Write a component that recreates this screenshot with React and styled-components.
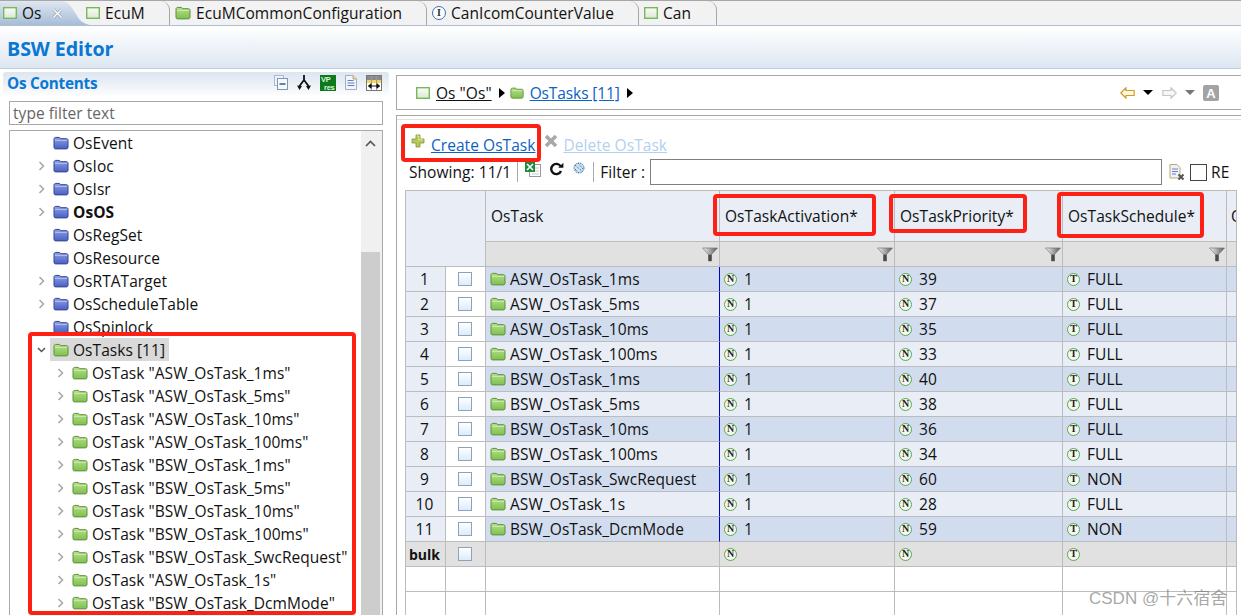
import React from "react";
import styled, { createGlobalStyle } from "styled-components";

const Global = createGlobalStyle`
  html, body { margin: 0; padding: 0; background: #fff; }
  body { font-family: "Open Sans", "Noto Sans", sans-serif; color: #111; }
`;

const Page = styled.div`
  position: relative; width: 1241px; height: 615px; overflow: hidden; background: #fff;
  font-size: 15.5px; letter-spacing: 0.05px;
`;
const Gap = styled.span`flex: none; width: ${p => p.$w}px;`;
const Lift = styled.span`flex: none; display: flex; margin-top: ${p => p.$by}px;`;

/* ---------- tabs ---------- */
const TabBar = styled.div`
  display: flex; height: 24px; background: #f2f2f2;
  border-top: 1px solid #a6a6a6; border-bottom: 1px solid #aebfd3;
`;
const ActiveTab = styled.div`
  position: relative; z-index: 1; flex: none; width: 90px; height: 24px; box-sizing: border-box;
  display: flex; align-items: center; padding-left: 3px; gap: 5px;
  background: linear-gradient(#dfe7f0, #a6bdd8);
  clip-path: path("M0 0 H62 C72 2 74 12 80 19 C83 22 86 23 90 24 H0 Z");
`;
const Tab = styled.div`
  flex: none; width: ${p => p.$w}px; height: 24px; box-sizing: border-box;
  margin-left: ${p => p.$ml || 0}px; padding-left: ${p => p.$pl || 5}px;
  display: flex; align-items: center; gap: 5px;
  border-right: 1px solid #a6a6a6; border-top-right-radius: 9px;
  background: #f2f2f2;
`;
const CloseMark = styled.svg`width: 11px; height: 11px; margin-left: 5px; flex: none;`;

/* ---------- header ---------- */
const EditorHeader = styled.div`
  height: 43px; box-sizing: border-box; padding-left: 7px; padding-top: 3px;
  display: flex; align-items: center;
  background: linear-gradient(#ffffff, #dde6f1);
  border-bottom: 1px solid #b6cde2;
  font-size: 19.7px; font-weight: 700; color: #0a78d2; letter-spacing: -0.1px;
`;

const Body = styled.div`display: flex; padding-top: 3px; height: 546px; box-sizing: border-box;`;

/* ---------- left ---------- */
const LeftColumn = styled.div`
  flex: none; width: 386px; margin-left: 3px; display: flex; flex-direction: column;
`;
const SectionHead = styled.div`
  height: 23px; flex: none; box-sizing: border-box; display: flex; align-items: center; padding: 0 7px 2px 4px;
  background: linear-gradient(#dde5f0, #fbfcfd); border-radius: 3px 3px 0 0;
  font-weight: 700; font-size: 15.3px; color: #0a78d2; letter-spacing: -0.25px;
`;
const SectionTools = styled.div`margin-left: auto; display: flex; align-items: center; gap: 9px;`;
const FilterBox = styled.div`
  flex: none; height: 24px; box-sizing: border-box; margin: 6px 6px 0; padding-left: 3px;
  border: 1px solid #a8a8a8; color: #666; display: flex; align-items: center;
`;
const TreeFrame = styled.div`
  flex: 1; min-height: 0; margin: 5px 6px 0; display: flex; border: 1px solid #a8a8a8; border-bottom: 0;
  overflow: hidden;
`;
const TreeList = styled.div`flex: 1; min-width: 0;`;
const Scroller = styled.div`
  flex: none; width: 21px; background: #f0f0f0; display: flex; flex-direction: column; align-items: flex-start;
`;
const ScrollUp = styled.svg`width: 19px; height: 24px; flex: none;`;
const ScrollThumb = styled.div`flex: 1; width: 19px; margin-top: 97px; background: #cdcdcd;`;
const TreeRow = styled.div`
  height: 23px; display: flex; align-items: center; padding-left: ${p => 23 + p.$depth * 19}px;
  font-weight: ${p => p.$bold ? 700 : 400}; white-space: nowrap;
`;
const ChevronSlot = styled.span`flex: none; width: 16px; margin-right: 4px; display: flex; justify-content: center;`;
const TreeNode = styled.span`
  display: flex; align-items: center; gap: 4px; height: 23px;
  margin-left: -3px; padding: 0 4px 0 3px; background: ${p => p.$sel ? "#d9d9d9" : "transparent"};
`;

/* ---------- right ---------- */
const RightColumn = styled.div`flex: 1; min-width: 0; margin-left: 7px; padding-top: 3px; display: flex; flex-direction: column;`;
const Breadcrumb = styled.div`
  flex: none; height: 35px; box-sizing: border-box; border: 1px solid #a8a8a8; border-right: 0;
  display: flex; align-items: center; padding-left: 19px; padding-right: 22px;
`;
const CrumbPlain = styled.span`margin-left: 6px; color: #111; text-decoration: underline;`;
const CrumbLink = styled.span`margin-left: 6px; color: #0a62c4; text-decoration: underline; letter-spacing: -0.1px;`;
const CrumbArrow = styled.span`
  width: 0; height: 0; margin: 0 5px 0 7px; border-left: 6px solid #000;
  border-top: 5px solid transparent; border-bottom: 5px solid transparent;
`;
const NavGroup = styled.div`margin-left: auto; display: flex; align-items: center;`;
const Caret = styled.span`
  width: 0; height: 0; margin: 0 ${p => p.$dim ? 8 : 9}px 0 8px; border-top: 5px solid ${p => p.$dim ? "#777" : "#000"};
  border-left: 5px solid transparent; border-right: 5px solid transparent;
`;
const MainPanel = styled.div`
  flex: 1; min-height: 0; margin-top: 5px; border-top: 1px solid #a8a8a8; border-left: 1px solid #a8a8a8;
  overflow: hidden;
`;
const InnerRule = styled.div`height: 1px; margin-top: 3px; background: #e2e2e2;`;
const ActionRow = styled.div`
  height: 25px; margin-top: 12px; display: flex; align-items: center; padding-left: 14px;
`;
const ActionLink = styled.span`
  color: ${p => p.$off ? "#b4d0ee" : "#0a62c4"}; text-decoration: underline;
  margin-left: ${p => p.$ml}px;
`;
const FilterRow = styled.div`
  height: 26px; margin-top: 2px; display: flex; align-items: center; padding-left: 12px;
`;
const Divider = styled.span`width: 1px; height: 20px; background: #a8a8a8; flex: none;`;
const FilterInput = styled.div`
  flex: none; width: 512px; height: 26px; box-sizing: border-box; border: 1px solid #7f7f7f; margin-left: 5px;
`;
const PlainBox = styled.span`
  flex: none; width: 15px; height: 15px; border: 1px solid #444; margin: 0 4px 0 5px;
`;

/* ---------- table ---------- */
const COLS = "40px 40px 234px 175px 168px 164px 9px";
const Table = styled.div`
  width: 832px; box-sizing: border-box; margin: 5px 0 0 8px; border: 1px solid #bcbcbc; border-bottom: 0;
`;
const HeadGrid = styled.div`display: grid; grid-template-columns: ${COLS}; grid-template-rows: 51px 25px;`;
const Corner = styled.div`
  grid-column: 1 / span 2; grid-row: 1 / span 2; background: #e8edf6;
  border-right: 1px solid #bcbcbc; border-bottom: 1px solid #bcbcbc;
`;
const HeadCell = styled.div`
  box-sizing: border-box; overflow: hidden; white-space: nowrap; padding-left: ${p => p.$pl || 5}px;
  display: flex; align-items: center; background: #e8edf6;
  border-right: ${p => p.$last ? 0 : "1px solid #bcbcbc"}; border-bottom: 1px solid #bcbcbc;
`;
const FilterCell = styled.div`
  box-sizing: border-box; background: #e1e1e1; display: flex; align-items: center; justify-content: flex-end; padding-right: 1px;
  border-right: ${p => p.$last ? 0 : "1px solid #bcbcbc"}; border-bottom: 1px solid #bcbcbc;
`;
const Row = styled.div`display: grid; grid-template-columns: ${COLS}; height: 25px;`;
const rowBg = p => ({ odd: "#d1ddee", even: "#e8edf6", bulk: "#e1e1e1", empty: "#fff" }[p.$tone]);
const NumCell = styled.div`
  box-sizing: border-box; display: flex; align-items: center; justify-content: center; padding-right: 2px;
  background: ${p => p.$tone === "bulk" ? "#e1e1e1" : p.$tone === "empty" ? "#fff" : "#e8edf6"};
  font-weight: ${p => p.$tone === "bulk" ? 700 : 400};
  font-size: ${p => p.$tone === "bulk" ? "14px" : "inherit"};
  border-right: 1px solid #bcbcbc; border-bottom: 1px solid #bcbcbc;
`;
const CheckCell = styled.div`
  box-sizing: border-box; display: flex; align-items: center; justify-content: center; padding-right: 1px;
  background: ${p => p.$tone === "bulk" ? "#e1e1e1" : "#fff"};
  border-right: 1px solid #bcbcbc; border-bottom: 1px solid #bcbcbc;
`;
const CheckBox = styled.span`
  width: 12px; height: 12px; border: 1px solid #8da2bb; background: linear-gradient(#fff, #dcebfb);
`;
const DataCell = styled.div`
  box-sizing: border-box; display: flex; align-items: center; gap: ${p => p.$gap || 7}px; white-space: nowrap; overflow: hidden;
  padding-left: ${p => p.$pl ?? 4}px; background: ${rowBg};
  border-right: ${p => p.$last ? 0 : p.$blue ? "1px solid #0000d2" : "1px solid #bcbcbc"};
  border-bottom: 1px solid #bcbcbc;
`;
const Badge = styled.span`
  flex: none; width: 11px; height: 11px; border: 1.5px solid #5aa845; border-radius: 50%; background: #f4f8f0;
  display: flex; align-items: center; justify-content: center;
  font: 700 10px/1 "Liberation Serif", serif; letter-spacing: 0; color: #222;
`;
const InfoBadge = styled(Badge)`
  border: 1.5px solid #3b6fb5; background: #fff; color: #234; width: 12px; height: 12px;
`;

/* ---------- overlay ---------- */
const Callout = styled.div`
  position: absolute; left: ${p => p.$x}px; top: ${p => p.$y}px; width: ${p => p.$w}px; height: ${p => p.$h}px;
  box-sizing: border-box; border: 4px solid #fd2014; border-radius: 4px; pointer-events: none; z-index: 5;
`;
const Watermark = styled.div`
  position: absolute; left: 1089px; top: 584px; z-index: 6; white-space: nowrap; letter-spacing: 0;
  font: 17px "Liberation Sans", "Noto Sans CJK SC", sans-serif; color: rgba(110,110,110,.62);
`;

/* ---------- icons ---------- */
const FolderSvg = styled.svg`flex: none;`;
const Folder = ({ tone = "green", w = 16 }) => {
  const c = tone === "green"
    ? ["#b6e088", "#7ec04f", "#5f8f3c"]
    : ["#8d9fe6", "#4a60c4", "#35458f"];
  return (
    <FolderSvg width={w} height="14" viewBox="0 0 16 14">
      <defs>
        <linearGradient id={`f-${tone}`} x1="0" y1="0" x2="0" y2="1">
          <stop offset="0" stopColor={c[0]} /><stop offset="1" stopColor={c[1]} />
        </linearGradient>
      </defs>
      <path d="M1 3.2C1 2 1.8 1.4 2.7 1.4H6c.8 0 1.1.8 1.8 1.3H13.4c1 0 1.6.6 1.6 1.6v7c0 1-.6 1.6-1.6 1.6H2.6c-1 0-1.6-.6-1.6-1.6Z"
        fill={`url(#f-${tone})`} stroke={c[2]} strokeWidth="1" />
      <path d="M1.8 4.4H14.2" stroke="#fff" strokeOpacity=".45" />
    </FolderSvg>
  );
};
const Module = () => (
  <FolderSvg width="14" height="12" viewBox="0 0 14 12">
    <defs>
      <linearGradient id="mod" x1="0" y1="0" x2="0" y2="1">
        <stop offset="0" stopColor="#fbfdf8" /><stop offset="1" stopColor="#dbe8d4" />
      </linearGradient>
    </defs>
    <rect x=".7" y=".7" width="12.6" height="10.6" fill="url(#mod)" stroke="#78b858" strokeWidth="1.4" />
  </FolderSvg>
);
const Chevron = ({ open }) => (
  <svg width="9" height="10" viewBox="0 0 9 10">
    {open
      ? <path d="M1 3l3.5 3.5L8 3" fill="none" stroke="#555" strokeWidth="1.5" />
      : <path d="M2.5 1L6.5 5 2.5 9" fill="none" stroke="#a6a6a6" strokeWidth="1.5" />}
  </svg>
);
const Funnel = () => (
  <svg width="16" height="15" viewBox="0 0 16 15">
    <defs>
      <linearGradient id="fun" x1="0" y1="0" x2="1" y2="0">
        <stop offset="0" stopColor="#f6f6f6" /><stop offset=".55" stopColor="#a0a0a0" /><stop offset="1" stopColor="#555" />
      </linearGradient>
    </defs>
    <path d="M.5 1H15.500L9.500 7.500V14H6.500V7.500Z" fill="url(#fun)" stroke="#777" strokeWidth=".7" />
    <rect x="6.500" y="7.500" width="3" height="6.500" fill="#4a4a4a" />
  </svg>
);
const Plus = () => (
  <svg width="14" height="14" viewBox="0 0 14 14">
    <path d="M5 1h4v4h4v4H9v4H5V9H1V5h4Z" fill="#b6cb55" stroke="#7f9440" strokeWidth=".8" />
    <path d="M5.8 2h2v3.8H12" fill="none" stroke="#e4ee9c" strokeWidth=".9" />
  </svg>
);
const Cross = () => (
  <svg width="14" height="14" viewBox="0 0 14 14">
    <path d="M2 2l10 10M12 2L2 12" stroke="#a8a8a8" strokeWidth="3.6" />
  </svg>
);
const Excel = () => (
  <svg width="16" height="15" viewBox="0 0 16 15">
    <rect x="4.500" y="2.500" width="11" height="12" fill="#fff" stroke="#9a9a9a" />
    <path d="M7 6h7M7 9h7M7 12h7" stroke="#c8c8c8" />
    <rect x="0" y="0" width="10" height="10" fill="#1e8a3a" />
    <path d="M2 2l6 6M8 2L2 8" stroke="#fff" strokeWidth="1.6" />
  </svg>
);
const Refresh = () => (
  <svg width="15" height="14" viewBox="0 0 15 14">
    <path d="M11.600 4.200A5.100 5.100 0 1 0 12 9" fill="none" stroke="#111" strokeWidth="2.400" />
    <path d="M9.200 5.800H14.400V.8Z" fill="#111" />
  </svg>
);
const Globe = () => (
  <svg width="12" height="12" viewBox="0 0 12 12">
    <circle cx="6" cy="6" r="5" fill="#cfe3f2" stroke="#3f7fae" strokeDasharray="1.6 .8" />
    <path d="M2 3l8 7M5 1l5 6M2 7l4 4" stroke="#2f6f9e" strokeDasharray="1.2 1" />
  </svg>
);
const ClearFilter = () => (
  <FolderSvg width="16" height="17" viewBox="0 0 16 17">
    <path d="M1 .5H8L11 3.500V14H1Z" fill="#eef1fa" stroke="#c0a770" />
    <path d="M3 5h6M3 7.500h6M3 10h4" stroke="#6c82bd" />
    <path d="M9.500 10.500l5 5M14.500 10.500l-5 5" stroke="#555" strokeWidth="2" />
  </FolderSvg>
);
const BackArrow = () => (
  <FolderSvg width="15" height="12" viewBox="0 0 15 12">
    <path d="M.8 6L6 .8V3.500H14.200V8.500H6V11.200Z" fill="#fff8e4" stroke="#d39a28" strokeWidth="1.200" />
  </FolderSvg>
);
const ForwardArrow = () => (
  <FolderSvg width="15" height="12" viewBox="0 0 15 12">
    <path d="M14.200 6L9 .8V3.500H.8V8.500H9V11.200Z" fill="#f6f6f6" stroke="#c6c6c6" strokeWidth="1.200" />
  </FolderSvg>
);
const LetterA = () => (
  <FolderSvg width="16" height="16" viewBox="0 0 16 16">
    <rect x="0" y="0" width="16" height="16" rx="2" fill="#a3a3a3" />
    <text x="8" y="13" textAnchor="middle" fontFamily="Liberation Sans" fontWeight="700" fontSize="13" fill="#fff">A</text>
  </FolderSvg>
);
const CollapseIcon = () => (
  <svg width="14" height="15" viewBox="0 0 14 15">
    <rect x=".5" y=".5" width="9" height="10" fill="#eef2f7" stroke="#a9bbd0" />
    <rect x="3.500" y="3.500" width="10" height="11" fill="#f6f8fb" stroke="#7f97b5" />
    <path d="M5.500 9H11.500" stroke="#3a6aa0" strokeWidth="1.600" />
  </svg>
);
const ForkIcon = () => (
  <svg width="14" height="17" viewBox="0 0 14 17">
    <path d="M7 1V6M7 6L2.500 12M7 6l4.500 6" fill="none" stroke="#111" strokeWidth="1.800" />
    <path d="M0 11.500L5 12 2.500 16ZM14 11.500L9 12 11.500 16Z" fill="#111" />
  </svg>
);
const VpIcon = () => (
  <svg width="16" height="16" viewBox="0 0 16 16">
    <rect width="16" height="16" fill="#0d7a1c" />
    <text x="1" y="7" fontFamily="Liberation Sans" fontSize="7.500" fill="#dff5df">VP</text>
    <text x="4" y="14.500" fontFamily="Liberation Sans" fontSize="7.500" fill="#dff5df">res</text>
  </svg>
);
const DocIcon = () => (
  <svg width="12" height="15" viewBox="0 0 12 15">
    <path d="M.5.5H8L11.500 4V14.500H.5Z" fill="#f2f5fb" stroke="#a3aec6" />
    <path d="M8 .5V4H11.500" fill="#e6d9a8" stroke="#b8a66a" />
    <path d="M2.500 5.500h6M2.500 8h7M2.500 10.500h7" stroke="#5f7fb8" />
  </svg>
);
const GridIcon = () => (
  <svg width="16" height="16" viewBox="0 0 16 16">
    <rect x=".5" y=".5" width="15" height="15" fill="#fff" stroke="#777" />
    <rect x="1" y="1" width="14" height="4" fill="#8a8a8a" />
    <rect x="1" y="5" width="14" height="3" fill="#f5d65c" />
    <path d="M5.500 1V15M10.500 1V15" stroke="#999" />
    <path d="M2.500 11H13.500M2.500 11l2.500-2.200v4.400ZM13.500 11L11 8.800v4.400Z" fill="#111" stroke="#111" />
  </svg>
);

/* ---------- data ---------- */
const upper = [
  ["OsEvent", false], ["OsIoc", true], ["OsIsr", true], ["OsOS", true, true], ["OsRegSet", false],
  ["OsResource", false], ["OsRTATarget", true], ["OsScheduleTable", true], ["OsSpinlock", false],
];
const tasks = [
  ["ASW_OsTask_1ms", 39, "FULL"], ["ASW_OsTask_5ms", 37, "FULL"], ["ASW_OsTask_10ms", 35, "FULL"],
  ["ASW_OsTask_100ms", 33, "FULL"], ["BSW_OsTask_1ms", 40, "FULL"], ["BSW_OsTask_5ms", 38, "FULL"],
  ["BSW_OsTask_10ms", 36, "FULL"], ["BSW_OsTask_100ms", 34, "FULL"], ["BSW_OsTask_SwcRequest", 60, "NON"],
  ["ASW_OsTask_1s", 28, "FULL"], ["BSW_OsTask_DcmMode", 59, "NON"],
];

export default function App() {
  return (
    <Page>
      <Global />
      <TabBar>
        <ActiveTab>
          <Module /><span>Os</span>
          <CloseMark viewBox="0 0 11 11"><path d="M1.500 1.500l8 8M9.500 1.500l-8 8" stroke="#9aa6b4" strokeWidth="3" /><path d="M1.500 1.500l8 8M9.500 1.500l-8 8" stroke="#fff" strokeWidth="1.400" /></CloseMark>
        </ActiveTab>
        <Tab $w={85} $ml={-5} $pl={1}><Module /><span>EcuM</span></Tab>
        <Tab $w={257}><Folder /><span>EcuMCommonConfiguration</span></Tab>
        <Tab $w={212}><InfoBadge>I</InfoBadge><span>CanIcomCounterValue</span></Tab>
        <Tab $w={78}><Module /><span>Can</span></Tab>
      </TabBar>
      <EditorHeader>BSW Editor</EditorHeader>
      <Body>
        <LeftColumn>
          <SectionHead>
            Os Contents
            <SectionTools>
              <CollapseIcon /><ForkIcon /><VpIcon /><DocIcon /><GridIcon />
            </SectionTools>
          </SectionHead>
          <FilterBox>type filter text</FilterBox>
          <TreeFrame>
            <TreeList>
              {upper.map(([t, c, b]) => (
                <TreeRow key={t} $depth={0} $bold={b}>
                  <ChevronSlot>{c && <Chevron />}</ChevronSlot>
                  <TreeNode><Folder tone="blue" />{t}</TreeNode>
                </TreeRow>
              ))}
              <TreeRow $depth={0}>
                <ChevronSlot><Chevron open /></ChevronSlot>
                <TreeNode $sel><Folder />OsTasks [11]</TreeNode>
              </TreeRow>
              {tasks.map(([t]) => (
                <TreeRow key={t} $depth={1}>
                  <ChevronSlot><Chevron /></ChevronSlot>
                  <TreeNode><Folder />OsTask "{t}"</TreeNode>
                </TreeRow>
              ))}
            </TreeList>
            <Scroller>
              <ScrollUp viewBox="0 0 19 24"><path d="M5 15l4.500-4.500L14 15" fill="none" stroke="#555" strokeWidth="1.700" /></ScrollUp>
              <ScrollThumb />
            </Scroller>
          </TreeFrame>
        </LeftColumn>
        <RightColumn>
          <Breadcrumb>
            <Module /><CrumbPlain>Os "Os"</CrumbPlain><CrumbArrow /><Folder w={14} /><CrumbLink>OsTasks [11]</CrumbLink><CrumbArrow />
            <NavGroup>
              <BackArrow /><Caret /><ForwardArrow /><Caret $dim /><LetterA />
            </NavGroup>
          </Breadcrumb>
          <MainPanel>
            <InnerRule />
            <ActionRow>
              <Lift $by={-7}><Plus /></Lift>
              <ActionLink $ml={6}>Create OsTask</ActionLink>
              <Gap $w={9} />
              <Lift $by={-8}><Cross /></Lift>
              <ActionLink $off $ml={5}>Delete OsTask</ActionLink>
            </ActionRow>
            <FilterRow>
              <span>Showing: 11/1</span>
              <Gap $w={6} /><Divider />
              <Gap $w={7} /><Lift $by={-6}><Excel /></Lift>
              <Gap $w={8} /><Lift $by={-6}><Refresh /></Lift>
              <Gap $w={9} /><Lift $by={-8}><Globe /></Lift>
              <Gap $w={8} /><Divider />
              <Gap $w={6} /><span>Filter :</span>
              <FilterInput />
              <Gap $w={7} /><ClearFilter />
              <PlainBox /><span>RE</span>
            </FilterRow>
            <Table>
              <HeadGrid>
                <Corner />
                <HeadCell>OsTask</HeadCell>
                <HeadCell>OsTaskActivation*</HeadCell>
                <HeadCell>OsTaskPriority*</HeadCell>
                <HeadCell>OsTaskSchedule*</HeadCell>
                <HeadCell $last $pl={4}>O</HeadCell>
                <FilterCell><Funnel /></FilterCell>
                <FilterCell><Funnel /></FilterCell>
                <FilterCell><Funnel /></FilterCell>
                <FilterCell><Funnel /></FilterCell>
                <FilterCell $last />
              </HeadGrid>
              {tasks.map(([name, prio, sched], i) => {
                const tone = i % 2 === 0 ? "odd" : "even";
                return (
                  <Row key={name}>
                    <NumCell $tone={tone}>{i + 1}</NumCell>
                    <CheckCell $tone={tone}><CheckBox /></CheckCell>
                    <DataCell $tone={tone} $blue $gap={4}><Folder />{name}</DataCell>
                    <DataCell $tone={tone}><Badge>N</Badge>1</DataCell>
                    <DataCell $tone={tone}><Badge>N</Badge>{prio}</DataCell>
                    <DataCell $tone={tone}><Badge>T</Badge>{sched}</DataCell>
                    <DataCell $tone={tone} $last />
                  </Row>
                );
              })}
              <Row>
                <NumCell $tone="bulk">bulk</NumCell>
                <CheckCell $tone="bulk"><CheckBox /></CheckCell>
                <DataCell $tone="bulk" />
                <DataCell $tone="bulk"><Badge>N</Badge></DataCell>
                <DataCell $tone="bulk"><Badge>N</Badge></DataCell>
                <DataCell $tone="bulk"><Badge>T</Badge></DataCell>
                <DataCell $tone="bulk" $last />
              </Row>
              {[0, 1].map(k => (
                <Row key={k}>
                  <NumCell $tone="empty" />
                  <CheckCell $tone="empty" />
                  <DataCell $tone="empty" />
                  <DataCell $tone="empty" />
                  <DataCell $tone="empty" />
                  <DataCell $tone="empty" />
                  <DataCell $tone="empty" $last />
                </Row>
              ))}
            </Table>
          </MainPanel>
        </RightColumn>
      </Body>
      <Callout $x={28} $y={332} $w={328} $h={283} />
      <Callout $x={401} $y={124} $w={140} $h={38} />
      <Callout $x={713} $y={194} $w={163} $h={42} />
      <Callout $x={889} $y={194} $w={138} $h={39} />
      <Callout $x={1057} $y={192} $w={147} $h={46} />
      <Watermark>CSDN @十六宿舍</Watermark>
    </Page>
  );
}
